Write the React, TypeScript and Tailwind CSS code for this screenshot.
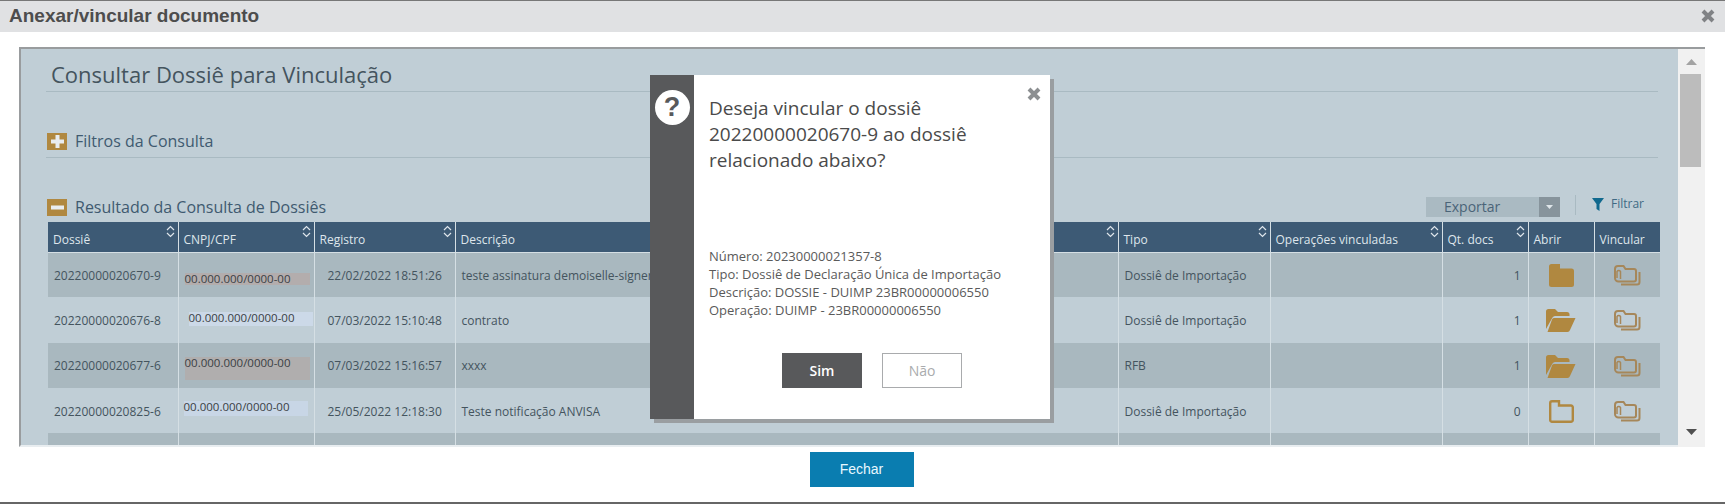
const OPEN_SANS = "font-['Open_Sans',sans-serif]";

// cnpj patches are the marked-over blocks in the reference, each with its own size
const ROWS = [
  {
    numero: "20220000020670-9",
    cnpjClass: "ml-[6px] mt-[20px] h-[12px] w-[125px] bg-[#b3adad]",
    registro: "22/02/2022 18:51:26",
    descricao: "teste assinatura demoiselle-signer",
    tipo: "Dossiê de Importação",
    docs: "1",
    folder: "closed",
  },
  {
    numero: "20220000020676-8",
    cnpjClass: "ml-[10px] mt-[15px] h-[14px] w-[124px] bg-[#ccd9e8]",
    registro: "07/03/2022 15:10:48",
    descricao: "contrato",
    tipo: "Dossiê de Importação",
    docs: "1",
    folder: "open",
  },
  {
    numero: "20220000020677-6",
    cnpjClass: "ml-[6px] mt-[14px] h-[23px] w-[125px] bg-[#b0aeae]",
    registro: "07/03/2022 15:16:57",
    descricao: "xxxx",
    tipo: "RFB",
    docs: "1",
    folder: "open",
  },
  {
    numero: "20220000020825-6",
    cnpjClass: "ml-[5px] mt-[13px] h-[15px] w-[124px] bg-[#c8d6e6]",
    registro: "25/05/2022 12:18:30",
    descricao: "Teste notificação ANVISA",
    tipo: "Dossiê de Importação",
    docs: "0",
    folder: "empty",
  },
];

const HEADERS = [
  { label: "Dossiê", sortable: true },
  { label: "CNPJ/CPF", sortable: true },
  { label: "Registro", sortable: true },
  { label: "Descrição", sortable: true },
  { label: "Tipo", sortable: true },
  { label: "Operações vinculadas", sortable: true },
  { label: "Qt. docs", sortable: true },
  { label: "Abrir", sortable: false },
  { label: "Vincular", sortable: false },
];

function SortIcon() {
  return (
    <svg width="9" height="13" viewBox="0 0 9 13" fill="none" stroke="#dfe6ec" strokeWidth="1.2" className="shrink-0">
      <path d="M1 5 L4.5 1.5 L8 5" />
      <path d="M1 8 L4.5 11.5 L8 8" />
    </svg>
  );
}

function FolderIcon({ kind }: { kind: string }) {
  if (kind === "open") {
    return (
      <svg width="30" height="23" viewBox="0 0 30 23" fill="#b08840">
        <path d="M0 20 V2.5 A2.5 2.5 0 0 1 2.5 0 H9 L12 3 H21 A2.5 2.5 0 0 1 23.5 5.5 V7 H9 A3 3 0 0 0 6.5 8.5 Z" />
        <path d="M8 9 H29.5 L24 21 A3 3 0 0 1 21.5 23 H1.5 L6 10.5 A2 2 0 0 1 8 9 Z" />
      </svg>
    );
  }
  if (kind === "empty") {
    return (
      <svg width="25" height="23" viewBox="0 0 25 23" fill="none" stroke="#b08840" strokeWidth="2.4">
        <path d="M1.2 3 A1.8 1.8 0 0 1 3 1.2 H10 V5.5 H22 A1.8 1.8 0 0 1 23.8 7.3 V20 A1.8 1.8 0 0 1 22 21.8 H3 A1.8 1.8 0 0 1 1.2 20 Z" />
      </svg>
    );
  }
  return (
    <svg width="25" height="23" viewBox="0 0 25 23" fill="#b08840">
      <path d="M0 2.5 A2.5 2.5 0 0 1 2.5 0 H11 V4.5 H22.5 A2.5 2.5 0 0 1 25 7 V20.5 A2.5 2.5 0 0 1 22.5 23 H2.5 A2.5 2.5 0 0 1 0 20.5 Z" />
    </svg>
  );
}

function LinkIcon() {
  return (
    <svg width="27" height="21" viewBox="0 0 27 21" fill="none" stroke="#a6875a" strokeWidth="2">
      <path d="M1 8 V4 A3 3 0 0 1 4 1 H9.5 L11.5 4 H20 A2 2 0 0 1 22 6 V14.5 A2 2 0 0 1 20 16.5 H4.5 A3.5 3.5 0 0 1 1 13 Z" />
      <path d="M6.5 14 V6.5 A2 2 0 0 0 3 6.5 V13" strokeWidth="1.5" />
      <path d="M25.5 7 V17 A2.5 2.5 0 0 1 23 19.5 H7" />
    </svg>
  );
}

function SectionToggle({ open }: { open: boolean }) {
  return (
    <span className="flex h-[17px] w-[20px] shrink-0 items-center justify-center bg-[#b08840]">
      <svg width="13" height="13" viewBox="0 0 13 13" fill="#e9edf0">
        <rect x="0" y="4.5" width="13" height="4" />
        {!open && <rect x="4.5" y="0" width="4" height="13" />}
      </svg>
    </span>
  );
}

function Row({ row, dark }: { row: (typeof ROWS)[number]; dark: boolean }) {
  const cell = "border-l border-[#d5dfe4] pt-[2px] align-middle first:border-l-0";
  return (
    <tr className={`h-[45.33px] ${dark ? "bg-[#a9b8bf]" : "bg-[#c0ced6]"} text-[12px] text-[#44545e]`}>
      <td className={`${cell} pl-[6px]`}>{row.numero}</td>
      <td className="border-l border-[#d5dfe4] align-top">
        <div className={`${row.cnpjClass} text-[11.5px] leading-[12px] text-[#3a3f44] whitespace-nowrap`}>
          00.000.000/0000-00
        </div>
      </td>
      <td className={`${cell} pl-[13px] whitespace-nowrap`}>{row.registro}</td>
      <td className={`${cell} pl-[6px] whitespace-nowrap`}>{row.descricao}</td>
      <td className={`${cell} pl-[6px]`}>{row.tipo}</td>
      <td className={cell}></td>
      <td className={`${cell} pr-[7px] text-right`}>{row.docs}</td>
      <td className={cell}>
        <div className="flex justify-center">
          <FolderIcon kind={row.folder} />
        </div>
      </td>
      <td className={cell}>
        <div className="flex justify-center">
          <LinkIcon />
        </div>
      </td>
    </tr>
  );
}

function ConfirmModal() {
  return (
    <div className={`absolute left-[650px] top-[74px] flex h-[344px] w-[400px] bg-white shadow-[4px_4px_0_#9a9ea1] ${OPEN_SANS}`}>
      <div className="flex w-[44px] shrink-0 justify-center bg-[#58595b] pt-[15px]">
        <div className="flex h-[35px] w-[35px] items-center justify-center rounded-full bg-white font-['Liberation_Sans',sans-serif] text-[27px] font-bold text-[#58595b]">
          ?
        </div>
      </div>
      <div className="relative flex-1 pl-[15px]">
        <svg width="14" height="14" viewBox="0 0 14 14" stroke="#8c8f91" strokeWidth="4" className="absolute right-[9px] top-[12px]">
          <path d="M2 2 L12 12 M12 2 L2 12" />
        </svg>
        <p className="mt-[20px] w-[300px] text-[19px] leading-[26px] text-[#4a4a4a]">
          Deseja vincular o dossiê 20220000020670-9 ao dossiê relacionado abaixo?
        </p>
        <div className="mt-[74px] text-[13px] leading-[18px] text-[#5a5a5a]">
          <p>Número: 20230000021357-8</p>
          <p>Tipo: Dossiê de Declaração Única de Importação</p>
          <p>Descrição: DOSSIE - DUIMP 23BR00000006550</p>
          <p>Operação: DUIMP - 23BR00000006550</p>
        </div>
        <div className="ml-[73px] mt-[34px] flex gap-[20px] text-[14px]">
          <button className="h-[35px] w-[80px] bg-[#58595b] font-semibold text-white">Sim</button>
          <button className="h-[35px] w-[80px] border border-[#a9abad] bg-white text-[#a9abad]">Não</button>
        </div>
      </div>
    </div>
  );
}

export default function App() {
  return (
    <div className="relative flex h-[504px] w-[1725px] flex-col overflow-hidden border-t border-b-2 border-t-[#777] border-b-[#666] bg-white">
      {/* Dialog title bar */}
      <div className="flex h-[31px] shrink-0 items-center justify-between bg-[#e0e1e3] pb-[2px] pl-[9px] pr-[10px]">
        <h1 className="font-['Liberation_Sans',sans-serif] text-[19px] font-bold leading-[28px] text-[#4d4d4d]">
          Anexar/vincular documento
        </h1>
        <svg width="14" height="14" viewBox="0 0 14 14" stroke="#808285" strokeWidth="4">
          <path d="M2 2 L12 12 M12 2 L2 12" />
        </svg>
      </div>

      {/* Scrolling panel */}
      <div className={`ml-[19px] mt-[15px] flex h-[400px] w-[1686px] shrink-0 border-t-2 border-t-[#999c9e] bg-[#f1f1f1] ${OPEN_SANS}`}>
        <div className="h-[398px] w-[1659px] overflow-hidden border-b-2 border-l-2 border-b-[#e8edf0] border-l-[#999c9e] bg-[#c0ced6] pl-[25px]">
          <div className="h-[43px] w-[1612px] border-b border-[#a9bac2] pl-[5px] pt-[11px] text-[22px] leading-[28px] text-[#44545e]">
            Consultar Dossiê para Vinculação
          </div>

          <div className="mt-[41px] flex h-[25px] w-[1612px] items-start gap-[8px] border-b border-[#a9bac2] pl-[1px] text-[16px] leading-[17px] text-[#3f5a70]">
            <SectionToggle open={false} />
            Filtros da Consulta
          </div>

          <div className="ml-[2px] mt-[27px] w-[1612px]">
            <div className="flex h-[37px] items-start justify-between text-[#3f5a70]">
              <div className="mt-[14px] -ml-[1px] flex items-center gap-[8px] text-[16px] leading-[17px]">
                <SectionToggle open={true} />
                Resultado da Consulta de Dossiês
              </div>
              <div className="flex items-start">
                <div className="mt-[12px] flex h-[20px] w-[134px] bg-[#aabac2] text-[14px] leading-[20px] text-[#4a6478]">
                  <span className="flex-1 pl-[18px]">Exportar</span>
                  <span className="flex w-[21px] items-center justify-center bg-[#87949c]">
                    <svg width="7" height="4" viewBox="0 0 7 4" fill="#dfe6ea">
                      <path d="M0 0 H7 L3.5 4 Z" />
                    </svg>
                  </span>
                </div>
                <div className="ml-[15px] mr-[16px] mt-[10px] h-[20px] w-px bg-[#a9bac2]" />
                <div className="mr-[16px] mt-[10px] flex items-center gap-[7px] text-[12px] leading-[18px] text-[#3f6a84]">
                  <svg width="12" height="13" viewBox="0 0 12 13" fill="#10698e">
                    <path d="M0 0 H12 L7.5 6 V13 L4.5 11 V6 Z" />
                  </svg>
                  Filtrar
                </div>
              </div>
            </div>

            <table className="w-[1612px] table-fixed border-collapse">
              <colgroup>
                <col className="w-[130px]" />
                <col className="w-[136px]" />
                <col className="w-[141px]" />
                <col className="w-[663px]" />
                <col className="w-[152px]" />
                <col className="w-[172px]" />
                <col className="w-[86px]" />
                <col className="w-[66px]" />
                <col className="w-[66px]" />
              </colgroup>
              <thead>
                <tr className="h-[30px] border-b border-[#d5dfe4] bg-[#3d5a75] text-left text-[12px] font-normal text-[#dfe6ec]">
                  {HEADERS.map((h) => (
                    <th key={h.label} className="border-l border-[#d5dfe4] p-0 font-normal first:border-l-0">
                      <div className="flex h-[29px] justify-between pl-[5px] pr-[3px] pt-[3px]">
                        <span className="self-end pb-[2px] leading-[18px] whitespace-nowrap">{h.label}</span>
                        {h.sortable && <SortIcon />}
                      </div>
                    </th>
                  ))}
                </tr>
              </thead>
              <tbody>
                {ROWS.map((row, i) => (
                  <Row key={row.numero} row={row} dark={i % 2 === 0} />
                ))}
                <tr className="h-[45.33px] bg-[#a9b8bf]">
                  <td className="border-l-0"></td>
                  <td className="border-l border-[#d5dfe4]"></td>
                  <td className="border-l border-[#d5dfe4]"></td>
                  <td className="border-l border-[#d5dfe4]"></td>
                  <td className="border-l border-[#d5dfe4]"></td>
                  <td className="border-l border-[#d5dfe4]"></td>
                  <td className="border-l border-[#d5dfe4]"></td>
                  <td className="border-l border-[#d5dfe4] pt-[2px] align-middle">
                    <div className="flex justify-center">
                      <FolderIcon kind="open" />
                    </div>
                  </td>
                  <td className="border-l border-[#d5dfe4] pt-[2px] align-middle">
                    <div className="flex justify-center">
                      <LinkIcon />
                    </div>
                  </td>
                </tr>
              </tbody>
            </table>
          </div>
        </div>

        {/* Scrollbar */}
        <div className="flex w-[27px] flex-col items-center justify-between pb-[12px] pt-[10px]">
          <div className="flex w-full flex-col items-center">
            <svg width="11" height="6" viewBox="0 0 11 6" fill="#a3a3a3">
              <path d="M5.5 0 L11 6 H0 Z" />
            </svg>
            <div className="ml-[-3px] mt-[9px] h-[93px] w-[21px] bg-[#bcbcbc]" />
          </div>
          <svg width="11" height="6" viewBox="0 0 11 6" fill="#505050">
            <path d="M0 0 H11 L5.5 6 Z" />
          </svg>
        </div>
      </div>

      {/* Footer */}
      <div className="mt-[5px] flex justify-center pr-[2px]">
        <button className="h-[35px] w-[104px] bg-[#0a7db0] font-['Liberation_Sans',sans-serif] text-[14px] text-[#e8f8ff]">
          Fechar
        </button>
      </div>

      <ConfirmModal />
    </div>
  );
}
